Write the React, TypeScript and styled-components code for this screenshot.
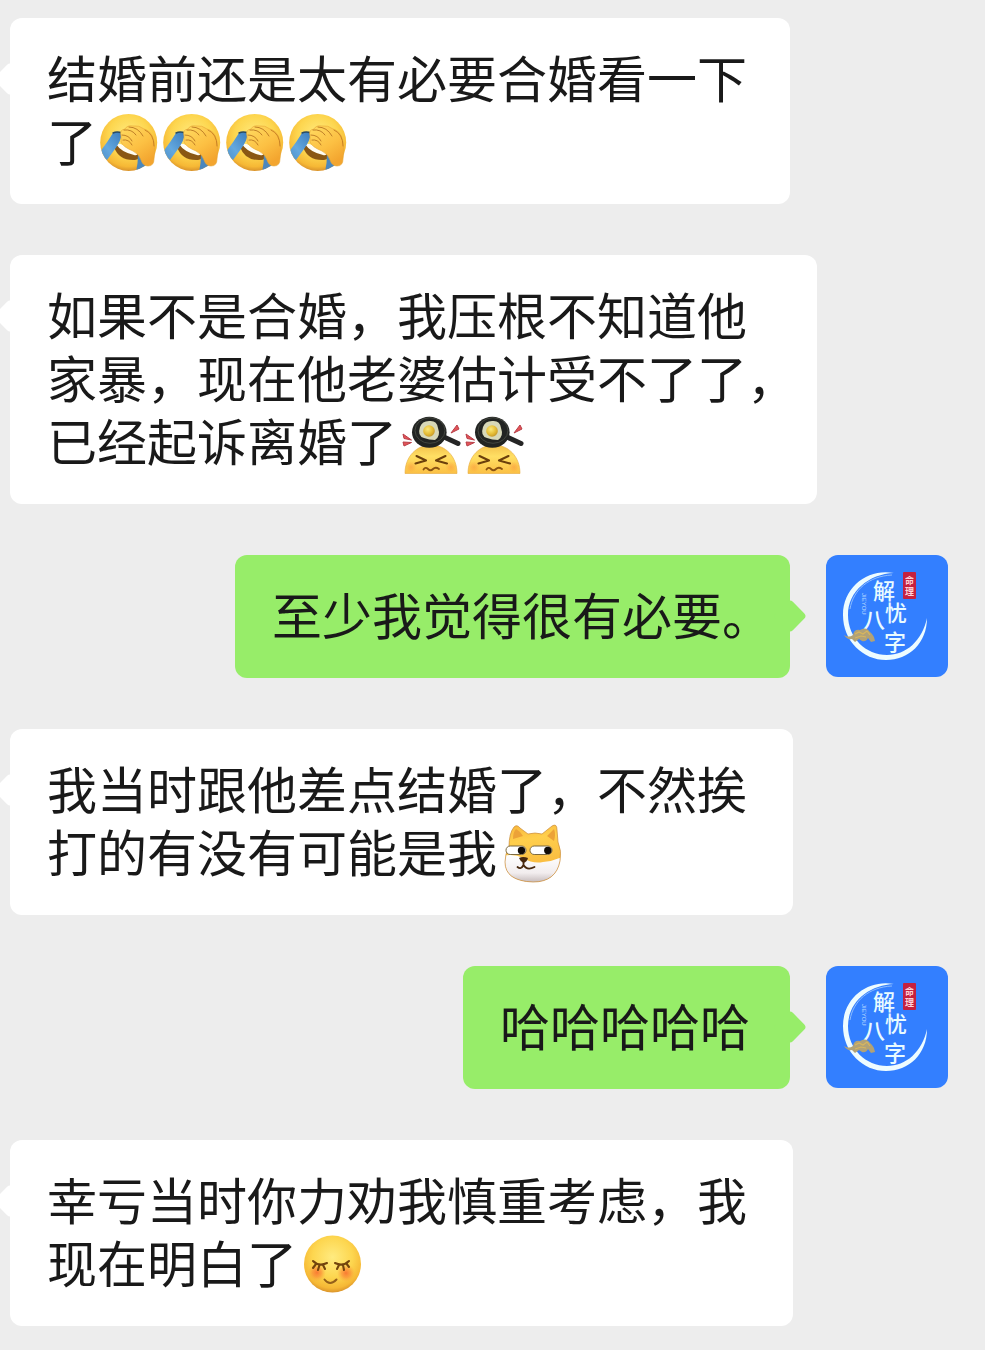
import React from "react";
import styled, { createGlobalStyle } from "styled-components";

const GlobalStyle = createGlobalStyle`
  *, *::before, *::after { box-sizing: border-box; }
  body {
    margin: 0;
    background: #ededed;
    color: #191919;
    font-family: "Noto Sans CJK SC", "Noto Sans", sans-serif;
    overflow-x: hidden;
  }
`;

const Chat = styled.main`
  display: flex;
  flex-direction: column;
  gap: 51px;
  padding: 18px 37px 24px 10px;
`;

const Row = styled.article<{ $own?: boolean }>`
  display: flex;
  align-items: flex-start;
  justify-content: ${(p) => (p.$own ? "flex-end" : "flex-start")};
  gap: 36px;
`;

const Bubble = styled.div<{ $own?: boolean; $width: number }>`
  position: relative;
  width: ${(p) => p.$width}px;
  max-width: 100%;
  padding: 27px 18px 33px 37px;
  border-radius: 12px;
  background: ${(p) => (p.$own ? "#97ed69" : "#ffffff")};

  &::before {
    content: "";
    position: absolute;
    top: 49px;
    ${(p) => (p.$own ? "right: -12px;" : "left: -12px;")}
    width: 24px;
    height: 24px;
    border-radius: 4px;
    background: inherit;
    transform: rotate(45deg);
  }
`;

const Text = styled.p`
  position: relative;
  margin: 0;
  font-size: 50px;
  line-height: 63px;
`;

const EmojiSvg = styled.svg`
  display: inline-block;
  width: 63px;
  height: 63px;
  vertical-align: top;
  overflow: visible;
`;

const AvatarSvg = styled.svg`
  flex: none;
  width: 122px;
  height: 122px;
  border-radius: 12px;
  background: #337fff;
`;

const SharedDefs = styled.svg`
  position: absolute;
  width: 0;
  height: 0;
`;

function Gradients() {
  return (
    <SharedDefs aria-hidden="true">
      <defs>
        <radialGradient id="face" cx="0.5" cy="0.38" r="0.64">
          <stop offset="0" stopColor="#ffeb80" />
          <stop offset="0.55" stopColor="#fdd64f" />
          <stop offset="0.85" stopColor="#f6b835" />
          <stop offset="1" stopColor="#d38b2a" />
        </radialGradient>
        <linearGradient id="hand" x1="0" y1="0" x2="0.6" y2="1">
          <stop offset="0" stopColor="#ffdb62" />
          <stop offset="0.6" stopColor="#fcc043" />
          <stop offset="1" stopColor="#f3a52f" />
        </linearGradient>
        <linearGradient id="tear" x1="1" y1="0" x2="0" y2="1">
          <stop offset="0" stopColor="#3b7cbc" />
          <stop offset="0.6" stopColor="#63a8df" />
          <stop offset="1" stopColor="#4d8dc6" />
        </linearGradient>
        <linearGradient id="dome" x1="0" y1="0" x2="0" y2="1">
          <stop offset="0" stopColor="#f3c04a" />
          <stop offset="0.4" stopColor="#ffdf64" />
          <stop offset="1" stopColor="#fbc044" />
        </linearGradient>
        <radialGradient id="blush">
          <stop offset="0" stopColor="#f9702f" stopOpacity="0.9" />
          <stop offset="0.5" stopColor="#fb8436" stopOpacity="0.6" />
          <stop offset="1" stopColor="#fba43c" stopOpacity="0" />
        </radialGradient>
        <linearGradient id="fur" x1="0" y1="0" x2="0.2" y2="1">
          <stop offset="0" stopColor="#f6b038" />
          <stop offset="0.35" stopColor="#ffcf4c" />
          <stop offset="1" stopColor="#f7b33a" />
        </linearGradient>
        <linearGradient id="muzzle" x1="0" y1="0" x2="0" y2="1">
          <stop offset="0" stopColor="#ffffff" />
          <stop offset="0.6" stopColor="#f2edee" />
          <stop offset="1" stopColor="#b9adae" />
        </linearGradient>
        <radialGradient id="yolk" cx="0.4" cy="0.35" r="0.7">
          <stop offset="0" stopColor="#fbe97a" />
          <stop offset="0.6" stopColor="#e5bd35" />
          <stop offset="1" stopColor="#c2952a" />
        </radialGradient>
      </defs>
    </SharedDefs>
  );
}

function Emoji({ label, children }: { label: string; children: React.ReactNode }) {
  return (
    <EmojiSvg viewBox="0 -3 63 63" role="img" aria-label={label}>
      {children}
    </EmojiSvg>
  );
}

function Facepalm() {
  return (
    <Emoji label="捂脸">
      <clipPath id="facepalm-clip">
        <circle cx="31.7" cy="31.4" r="28.5" />
      </clipPath>
      <circle cx="31.7" cy="31.4" r="28.5" fill="url(#face)" />
      <path d="M17 36Q19 34 23 35L41 43Q44 48 38 49Q22 50 17 36Z" fill="#8a5714" />
      <path d="M19 33Q22 32 26 34L41 41Q41 45 37 44Q24 41 19 33Z" fill="#fffdf4" />
      <g clipPath="url(#facepalm-clip)">
        <path d="M16 22Q20 20 25 22Q24 30 18 38L10 49L2 42Q10 32 16 22Z" fill="url(#tear)" />
        <path d="M41 43L50 55L46 62L39 61Q41 52 41 43Z" fill="#4b87bd" />
      </g>
      <path d="M16 22Q20 20 25 22" fill="none" stroke="#294b62" strokeWidth="1.4" strokeLinecap="round" />
      <path
        d="M24 25Q22 19 28 18Q30 14 36 15Q42 14 47 18Q54 20 56 27Q59 36 57 48Q57 55 51 55Q46 55 44 49Q42 43 36 40Q26 36 24 31Z"
        fill="url(#hand)"
        stroke="#e6a532"
        strokeWidth="0.6"
      />
      <path
        d="M25 24Q32 24 35 30M27 19Q35 18 39 24M32 16Q41 16 46 25M26 29Q32 28 35 34"
        fill="none"
        stroke="#b97622"
        strokeWidth="0.9"
        strokeLinecap="round"
      />
      <path d="M48 19Q57 23 57 35" fill="none" stroke="#c47d22" strokeWidth="0.9" strokeLinecap="round" />
    </Emoji>
  );
}

function FryingPan() {
  return (
    <Emoji label="平底锅">
      <path d="M8 62.5C8 45 20 34 34 34S60 45 60 62.5Z" fill="url(#dome)" stroke="#e5a93c" strokeWidth="0.6" />
      <circle cx="14" cy="56" r="6" fill="url(#blush)" opacity="0.35" />
      <circle cx="54" cy="56" r="6" fill="url(#blush)" opacity="0.35" />
      <path
        d="M19.5 45L29 49.5L18.5 52.5M48.5 45L39 49.5L50 52.5"
        fill="none"
        stroke="#6b3f0c"
        strokeWidth="2.1"
        strokeLinecap="round"
        strokeLinejoin="round"
      />
      <path
        d="M26.5 58.5Q28.5 55.5 31 58T36 58T42 58"
        fill="none"
        stroke="#8a5312"
        strokeWidth="1.8"
        strokeLinecap="round"
      />
      <path d="M47 26L61 32.5" stroke="#252525" strokeWidth="5" strokeLinecap="round" />
      <ellipse cx="32.3" cy="21.3" rx="17.3" ry="15.5" fill="#222422" />
      <ellipse cx="33" cy="19.5" rx="15" ry="12.8" fill="none" stroke="#43463f" strokeWidth="1" />
      <path d="M23 16Q25 10 32 10Q40 9 41 17Q44 25 38 29Q32 29 27 27Q20 25 23 16Z" fill="#d8d9b8" />
      <circle cx="32" cy="20" r="5.8" fill="url(#yolk)" />
      <path
        d="M6 23L14.5 29L7 27.5ZM6 31L14.5 31.5L7 35ZM60 14L62 18L54 22Z"
        fill="#e35458"
        stroke="#b83f48"
        strokeWidth="1"
        strokeLinejoin="round"
      />
    </Emoji>
  );
}

function Doge() {
  const head =
    "M12 25Q12 11 17 5Q20 2 23 6L31 12Q38 10 45 12L55 4Q60 1 60 8L61 20Q65 29 63 39Q59 60 36 60Q8 59 8 40Q8 32 12 25Z";
  return (
    <Emoji label="旺柴">
      <clipPath id="doge-clip">
        <path d={head} />
      </clipPath>
      <g clipPath="url(#doge-clip)">
        <rect x="5" y="0" width="62" height="62" fill="url(#fur)" />
        <path d="M5 34Q17 31 26 36Q36 42 46 40Q57 39 67 34V63H5Z" fill="url(#muzzle)" />
        <path d="M16 17Q16 10 19 7Q23 9 26 14ZM50 14L57 7Q59 12 57 19Z" fill="#eca238" />
      </g>
      <path d={head} fill="none" stroke="#c98b3c" strokeWidth="0.7" />
      <rect x="9" y="24" width="20" height="8.5" rx="4.2" fill="#fff" stroke="#7d6a40" strokeWidth="1" />
      <rect x="33" y="24" width="22" height="8.5" rx="4.2" fill="#fff" stroke="#7d6a40" strokeWidth="1" />
      <circle cx="24.5" cy="28.4" r="3.7" fill="#120d08" />
      <circle cx="50.8" cy="28.4" r="3.7" fill="#120d08" />
      <path d="M22 36Q26 34 31 36Q30 40 26.5 41Q23 39 22 36Z" fill="#49290e" />
      <path
        d="M26.5 40V43Q24 48 20.5 45M26.5 43Q30 49 37.5 45"
        fill="none"
        stroke="#49290e"
        strokeWidth="1.8"
        strokeLinecap="round"
      />
    </Emoji>
  );
}

function Blissful() {
  return (
    <Emoji label="愉快">
      <circle cx="35.5" cy="31" r="28.5" fill="url(#face)" />
      <circle cx="20" cy="39.5" r="9" fill="url(#blush)" />
      <circle cx="49" cy="40" r="9" fill="url(#blush)" />
      <path
        d="M16 28Q22 34 30 30M19 31L16 35M22.5 32L21 37M26 32L28 36M38 30Q46 34 52 28M42 32L40 36M46 32L47 37M49 30L52 34"
        fill="none"
        stroke="#72440d"
        strokeWidth="2.1"
        strokeLinecap="round"
      />
      <path d="M27.5 46.5Q33 53.5 39.5 46.5" fill="none" stroke="#94601a" strokeWidth="2" strokeLinecap="round" />
    </Emoji>
  );
}

const Brush = styled.text`
  fill: #e9fbff;
  font-size: 22px;
  font-weight: 500;
`;

const Seal = styled.text`
  fill: #ffd3d8;
  font-size: 9px;
  font-weight: 700;
`;

const Pinyin = styled.text`
  fill: #b9dcff;
  font-family: "Liberation Sans", sans-serif;
  font-size: 6px;
`;

function Avatar() {
  return (
    <AvatarSvg viewBox="0 0 122 122" role="img" aria-label="解忧八字">
      <path
        d="M68 18C43 13 17 31 17 60C17 86 37 105 60 105C83 105 101 88 101 63C96 86 80 100 61 100C40 100 22 83 22 60C22 36 43 19 68 18Z"
        fill="#eefcff"
      />
      <path d="M66 20C43 21 27 35 24 54" fill="none" stroke="#8cbcff" strokeWidth="1" />
      <Brush x="47" y="44">解</Brush>
      <Brush x="59" y="66">忧</Brush>
      <Brush x="37" y="73">八</Brush>
      <Brush x="58" y="95">字</Brush>
      <rect x="77" y="17" width="13" height="27" rx="1" fill="#c5213f" />
      <Seal x="79" y="29">命</Seal>
      <Seal x="79" y="40">理</Seal>
      <Pinyin transform="translate(36 38) rotate(90)">JIEYOU</Pinyin>
      <path
        d="M18 80Q23 83 27 80Q28 74 34 75Q40 71 44 77Q48 80 49 86L45 87L42 83Q40 87 36 86L33 84L29 87L26 84Q21 85 18 80Z"
        fill="#b2a276"
      />
      <path d="M29 79L33 77L37 79L41 76L44 80M29 83L35 81L40 82" fill="none" stroke="#d8b65e" strokeWidth="1.2" />
    </AvatarSvg>
  );
}

type MessageProps = { own?: boolean; width: number; children: React.ReactNode };

function Message({ own, width, children }: MessageProps) {
  return (
    <Row $own={own}>
      <Bubble $own={own} $width={width}>
        <Text>{children}</Text>
      </Bubble>
      {own && <Avatar />}
    </Row>
  );
}

export default function App() {
  return (
    <>
      <GlobalStyle />
      <Gradients />
      <Chat lang="zh-CN">
        <Message width={780}>
          结婚前还是太有必要合婚看一下了
          <Facepalm />
          <Facepalm />
          <Facepalm />
          <Facepalm />
        </Message>
        <Message width={807}>
          如果不是合婚，我压根不知道他
          <br />
          家暴，现在他老婆估计受不了了，已经起诉离婚了
          <FryingPan />
          <FryingPan />
        </Message>
        <Message own width={555}>
          至少我觉得很有必要。
        </Message>
        <Message width={783}>
          我当时跟他差点结婚了，不然挨打的有没有可能是我
          <Doge />
        </Message>
        <Message own width={327}>
          哈哈哈哈哈
        </Message>
        <Message width={783}>
          幸亏当时你力劝我慎重考虑，我现在明白了
          <Blissful />
        </Message>
      </Chat>
    </>
  );
}
